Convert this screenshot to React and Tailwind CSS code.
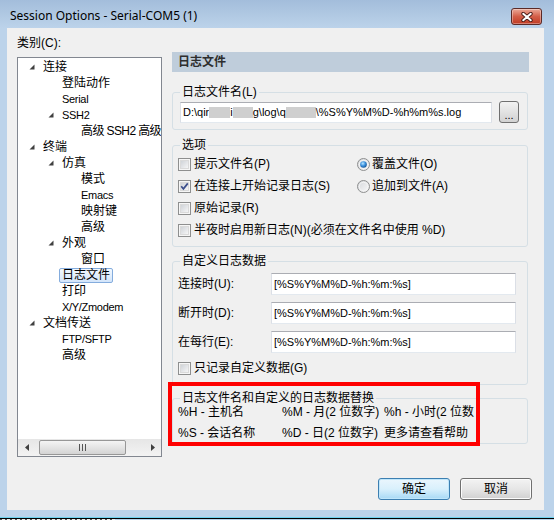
import React from 'react';

const tree = [
  { level: 0, label: '连接', open: true },
  { level: 1, label: '登陆动作' },
  { level: 1, label: 'Serial', latin: true },
  { level: 1, label: 'SSH2', open: true, latin: true },
  { level: 2, label: '高级 SSH2 高级', tight: true },
  { level: 0, label: '终端', open: true },
  { level: 1, label: '仿真', open: true },
  { level: 2, label: '模式' },
  { level: 2, label: 'Emacs', latin: true },
  { level: 2, label: '映射键' },
  { level: 2, label: '高级' },
  { level: 1, label: '外观', open: true },
  { level: 2, label: '窗口' },
  { level: 1, label: '日志文件', selected: true },
  { level: 1, label: '打印' },
  { level: 1, label: 'X/Y/Zmodem', latin: true },
  { level: 0, label: '文档传送', open: true },
  { level: 1, label: 'FTP/SFTP', latin: true },
  { level: 1, label: '高级' },
];

const indent = ['pl-[11px]', 'pl-[30px]', 'pl-[49px]'];

function Arrow() {
  return (
    <svg width="6" height="6" viewBox="0 0 6 6">
      <polygon points="5.5,0.5 5.5,5.5 0.5,5.5" fill="#404040" />
    </svg>
  );
}

function CheckBox({ checked }) {
  return (
    <svg width="13" height="13" viewBox="0 0 13 13" className="shrink-0">
      <defs>
        <linearGradient id="cbg" x1="0" y1="0" x2="1" y2="1">
          <stop offset="0" stopColor="#cdd1d6" />
          <stop offset="1" stopColor="#f8f8f8" />
        </linearGradient>
      </defs>
      <rect x="0.5" y="0.5" width="12" height="12" fill="#f6f6f6" stroke="#8e8f8f" />
      <rect x="2.5" y="2.5" width="8" height="8" fill="url(#cbg)" stroke="#dadada" />
      {checked && (
        <path d="M3.2 6.2 L5.4 8.8 L9.8 3.4" fill="none" stroke="#3c4f8c" strokeWidth="1.7" />
      )}
    </svg>
  );
}

function Radio({ checked }) {
  return (
    <svg width="13" height="13" viewBox="0 0 13 13" className="shrink-0">
      <defs>
        <linearGradient id="rbg" x1="0" y1="0" x2="1" y2="1">
          <stop offset="0" stopColor="#d3d6da" />
          <stop offset="1" stopColor="#fafafa" />
        </linearGradient>
        <radialGradient id="rdot" cx="0.4" cy="0.35" r="0.7">
          <stop offset="0" stopColor="#b8e6ff" />
          <stop offset="0.5" stopColor="#3d93e0" />
          <stop offset="1" stopColor="#14508f" />
        </radialGradient>
      </defs>
      <circle cx="6.5" cy="6.5" r="6" fill="url(#rbg)" stroke="#8e8f8f" />
      <circle cx="6.5" cy="6.5" r="4.2" fill="none" stroke="#f4f4f4" />
      {checked && <circle cx="6.5" cy="6.5" r="3.3" fill="url(#rdot)" />}
    </svg>
  );
}

// legend sits after the fieldset's padding, so legendMl = 7 - padding-left
function Group({ title, className, legendMl, children }) {
  return (
    <fieldset className={`w-[356px] border border-[#d5dfe5] rounded-[3px] ${className}`}>
      <legend className={`${legendMl} px-[2px] text-[12px] leading-[16px]`}>{title}</legend>
      {children}
    </fieldset>
  );
}

const field = 'bg-white border border-[#abadb3] border-l-[#dbdfe6] border-r-[#dbdfe6] border-b-[#e3e9ef]';

function Blur({ w }) {
  return <span className={`inline-block h-[11px] align-middle bg-[#cfcfcf] ${w}`} />;
}

export default function App() {
  return (
    <div className="relative w-[554px] h-[520px] bg-[#bcd3ea] flex flex-col overflow-hidden font-['Liberation_Sans','Noto_Sans_CJK_SC',sans-serif] text-black">
      {/* title bar */}
      <div className="h-[28px] shrink-0 flex items-start bg-gradient-to-b from-[#a3bddb] to-[#bcd3ea] pl-[10px] pr-[12px]">
        <span className="mt-[9px] text-[12px] leading-[14px] font-['Noto_Sans',sans-serif]">
          Session Options - Serial-COM5 (1)
        </span>
        <div className="ml-auto mt-[8px] w-[31px] h-[17px] rounded-[3px] border border-[#5b2a27] bg-gradient-to-b from-[#e9a898] via-[#d35e48] to-[#c03a22] flex items-center justify-center shadow-[inset_0_0_0_1px_rgba(255,255,255,0.35)]">
          <svg width="12" height="10" viewBox="0 0 12 10">
            <path d="M2.2 1.8 L9.8 8.2 M9.8 1.8 L2.2 8.2" stroke="#4a1e1a" strokeWidth="3.8" strokeLinecap="round" />
            <path d="M2.2 1.8 L9.8 8.2 M9.8 1.8 L2.2 8.2" stroke="#ffffff" strokeWidth="2" strokeLinecap="round" />
          </svg>
        </div>
      </div>

      {/* client area */}
      <div className="h-[482px] shrink-0 ml-[7px] mr-[10px] bg-[#f0f0f0] flex flex-col">
        <div className="flex px-[10px] pt-[7px]">
          {/* category tree */}
          <div className="w-[145px] flex flex-col">
            <div className="h-[16px] text-[12px] leading-[16px]">类别(C):</div>
            <div className="mt-[6px] h-[400px] border border-[#828790] bg-white flex flex-col">
              <div className="flex-1 pt-[1px] overflow-hidden">
                {tree.map((t, i) => (
                  <div key={i} className={`h-[16px] flex items-center whitespace-nowrap ${indent[t.level]}`}>
                    <span className="w-[14px] shrink-0 flex items-center">{t.open && <Arrow />}</span>
                    {t.selected ? (
                      <span className="-ml-[3px] h-[15px] px-[2px] flex items-center text-[12px] rounded-[2px] border border-[#84acdd] bg-gradient-to-b from-[#f2f8fe] to-[#d3e5fa]">
                        {t.label}
                      </span>
                    ) : (
                      <span
                        className={
                          t.latin
                            ? 'text-[11px] tracking-[-0.3px]'
                            : t.tight
                            ? 'text-[12px] tracking-[-0.6px]'
                            : 'text-[12px]'
                        }
                      >
                        {t.label}
                      </span>
                    )}
                  </div>
                ))}
              </div>
              {/* horizontal scrollbar */}
              <div className="h-[17px] shrink-0 flex items-center bg-gradient-to-b from-[#e6e6e6] to-[#f3f3f3]">
                <div className="w-[17px] flex justify-center">
                  <svg width="4" height="7" viewBox="0 0 4 7">
                    <polygon points="4,0 4,7 0,3.5" fill="#404040" />
                  </svg>
                </div>
                <div className="ml-[4px] w-[87px] h-[15px] rounded-[2px] border border-[#979797] bg-gradient-to-b from-[#f4f4f4] to-[#d4d4d4] flex items-center justify-center gap-[2px]">
                  <span className="w-[1px] h-[7px] bg-[#555]" />
                  <span className="w-[1px] h-[7px] bg-[#555]" />
                  <span className="w-[1px] h-[7px] bg-[#555]" />
                </div>
                <div className="flex-1" />
                <div className="w-[17px] flex justify-center">
                  <svg width="4" height="7" viewBox="0 0 4 7">
                    <polygon points="0,0 0,7 4,3.5" fill="#404040" />
                  </svg>
                </div>
              </div>
            </div>
          </div>

          {/* right panel */}
          <div className="ml-[10px] w-[357px] mt-[17px] flex flex-col">
            <div className="h-[20px] bg-[#bfcddb] pl-[6px] flex items-center text-[12px] font-bold text-[#2e2e2e]">日志文件</div>

            <Group title="日志文件名(L)" legendMl="ml-0" className="mt-[12px] pl-[7px] pr-[8px] pt-[1px] pb-[6px]">
              <div className="flex items-center">
                <div className={`flex-1 h-[21px] ${field} pl-[2px] flex items-center text-[11px] whitespace-nowrap overflow-hidden`}>
                  D:\qir<Blur w="w-[21px]" />i<Blur w="w-[20px]" />g\log\q<Blur w="w-[30px]" />\%S%Y%M%D-%h%m%s.log
                </div>
                <div className="ml-[7px] w-[20px] h-[22px] rounded-[3px] border border-[#707070] bg-gradient-to-b from-[#f2f2f2] to-[#d2d2d2] flex items-end justify-center pb-[3px] text-[11px] leading-[8px]">
                  ...
                </div>
              </div>
            </Group>

            <Group title="选项" legendMl="ml-[2px]" className="mt-[7px] pl-[5px] pb-[5px]">
              <div className="grid grid-cols-[179px_1fr] text-[12px]">
                <label className="h-[22px] flex items-center gap-[3px]"><CheckBox /> 提示文件名(P)</label>
                <label className="h-[22px] flex items-center gap-[2px]"><Radio checked /> 覆盖文件(O)</label>
                <label className="h-[22px] flex items-center gap-[3px] whitespace-nowrap"><CheckBox checked /> 在连接上开始记录日志(S)</label>
                <label className="h-[22px] flex items-center gap-[2px]"><Radio /> 追加到文件(A)</label>
                <label className="h-[22px] flex items-center gap-[3px] col-span-2"><CheckBox /> 原始记录(R)</label>
                <label className="h-[22px] flex items-center gap-[3px] col-span-2 whitespace-nowrap"><CheckBox /> 半夜时启用新日志(N)(必须在文件名中使用 %D)</label>
              </div>
            </Group>

            <Group title="自定义日志数据" legendMl="ml-[2px]" className="mt-[6px] pl-[5px] pr-[11px] pt-[4px] pb-[5px]">
              <div className="flex flex-col gap-[7px] text-[12px]">
                {['连接时(U):', '断开时(D):', '在每行(E):'].map((l) => (
                  <div key={l} className="flex items-center">
                    <span className="w-[93px]">{l}</span>
                    <div className={`flex-1 h-[22px] ${field} pl-[2px] flex items-center text-[11px]`}>[%S%Y%M%D-%h:%m:%s]</div>
                  </div>
                ))}
              </div>
              <label className="mt-[4px] h-[22px] flex items-center gap-[3px] text-[12px]"><CheckBox /> 只记录自定义数据(G)</label>
            </Group>

            <Group title="日志文件名和自定义的日志数据替换" legendMl="ml-[2px]" className="mt-[5px] pl-[5px] pb-[3px]">
              <div className="-mt-[1px] grid grid-cols-[104px_102px_1fr] gap-y-[7px] text-[12px] leading-[14px] whitespace-nowrap">
                <span>%H - 主机名</span>
                <span>%M - 月(2 位数字)</span>
                <span>%h - 小时(2 位数</span>
                <span>%S - 会话名称</span>
                <span>%D - 日(2 位数字)</span>
                <span>更多请查看帮助</span>
              </div>
            </Group>
          </div>
        </div>

        {/* dialog buttons */}
        <div className="mt-auto flex justify-end gap-[10px] pr-[12px] pb-[10px] text-[12px]">
          <button className="w-[72px] h-[22px] rounded-[3px] border border-[#3c7fb1] bg-gradient-to-b from-[#eaf6fd] via-[#d9f0fc] to-[#a7d9f5] shadow-[inset_0_0_0_1px_#bfe6fb]">确定</button>
          <button className="w-[72px] h-[22px] rounded-[3px] border border-[#707070] bg-gradient-to-b from-[#f3f3f3] via-[#e6e6e6] to-[#d0d0d0] shadow-[inset_0_0_0_1px_#fcfcfc]">取消</button>
        </div>
      </div>

      {/* bottom frame edge */}
      <div className="h-[7px] shrink-0" />
      <div className="h-[1px] shrink-0 bg-[#6fd3ef]" />
      <div className="h-[1px] shrink-0 bg-black" />
      <div className="h-[1px] w-[115px] shrink-0 bg-[repeating-linear-gradient(90deg,#555_0_2px,#f0f0f0_2px_5px)]" />

      {/* red annotation box */}
      <div className="absolute left-[168px] top-[382px] w-[312px] h-[64px] border-[4px] border-[#ff0000]" />
    </div>
  );
}
